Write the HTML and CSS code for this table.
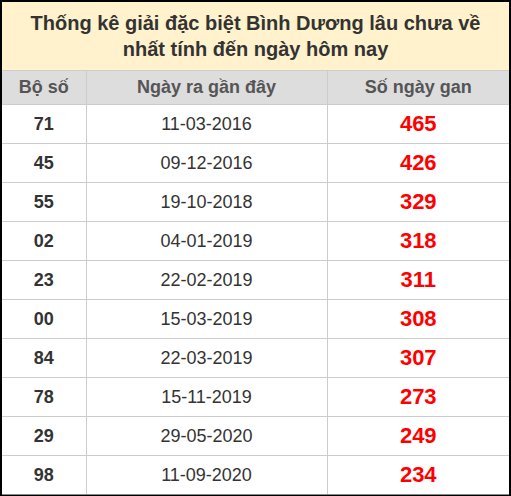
FILE: index.html
```html
<!DOCTYPE html>
<html lang="vi">
<head>
<meta charset="utf-8">
<link rel="stylesheet" href="styles.css">
</head>
<body>
<div class="frame">
  <table class="gan">
    <colgroup><col class="c1"><col class="c2"><col class="c3"></colgroup>
    <thead>
      <tr><th colspan="3" class="title">Thống kê giải đặc biệt Bình Dương lâu chưa về nhất tính đến ngày hôm nay</th></tr>
      <tr class="head"><th>Bộ số</th><th>Ngày ra gần đây</th><th>Số ngày gan</th></tr>
    </thead>
    <tbody>
      <tr><td class="num">71</td><td class="date">11-03-2016</td><td class="days">465</td></tr>
      <tr><td class="num">45</td><td class="date">09-12-2016</td><td class="days">426</td></tr>
      <tr><td class="num">55</td><td class="date">19-10-2018</td><td class="days">329</td></tr>
      <tr><td class="num">02</td><td class="date">04-01-2019</td><td class="days">318</td></tr>
      <tr><td class="num">23</td><td class="date">22-02-2019</td><td class="days">311</td></tr>
      <tr><td class="num">00</td><td class="date">15-03-2019</td><td class="days">308</td></tr>
      <tr><td class="num">84</td><td class="date">22-03-2019</td><td class="days">307</td></tr>
      <tr><td class="num">78</td><td class="date">15-11-2019</td><td class="days">273</td></tr>
      <tr><td class="num">29</td><td class="date">29-05-2020</td><td class="days">249</td></tr>
      <tr><td class="num">98</td><td class="date">11-09-2020</td><td class="days">234</td></tr>
    </tbody>
  </table>
</div>
</body>
</html>
```
FILE: styles.css
```css
html, body {
  margin: 0;
  padding: 0;
  background: #fff;
}
.frame {
  width: 507px;
  border-left: 2px solid #000;
  border-right: 2px solid #000;
  border-top: 2px solid #000;
  border-bottom: 1px solid #000;
  font-family: "Liberation Sans", Arial, sans-serif;
}
.gan {
  width: 100%;
  border-collapse: collapse;
  table-layout: fixed;
}
.c1 { width: 84px; }
.c2 { width: 241px; }
.c3 { width: auto; }
.gan th, .gan td {
  border: 1px solid #ccc;
  padding: 0;
  text-align: center;
}
.gan tr > :first-child { border-left: none; }
.gan tr > :last-child { border-right: none; }
.gan .title {
  background: #fff2cc;
  color: #333;
  font-size: 20px;
  font-weight: bold;
  line-height: 26px;
  height: 68px;
  padding: 0 25px;
  border-top: none;
}
.head th {
  background: #ddd;
  color: #555;
  font-size: 18px;
  font-weight: bold;
  height: 33px;
}
.gan td {
  height: 38px;
  color: #333;
  font-size: 18px;
}
.gan td.num { font-weight: bold; }
.gan td.days {
  color: #f00;
  font-weight: bold;
  font-size: 22px;
}
.gan tbody tr:last-child td { border-bottom: 1px solid #888; }
```
